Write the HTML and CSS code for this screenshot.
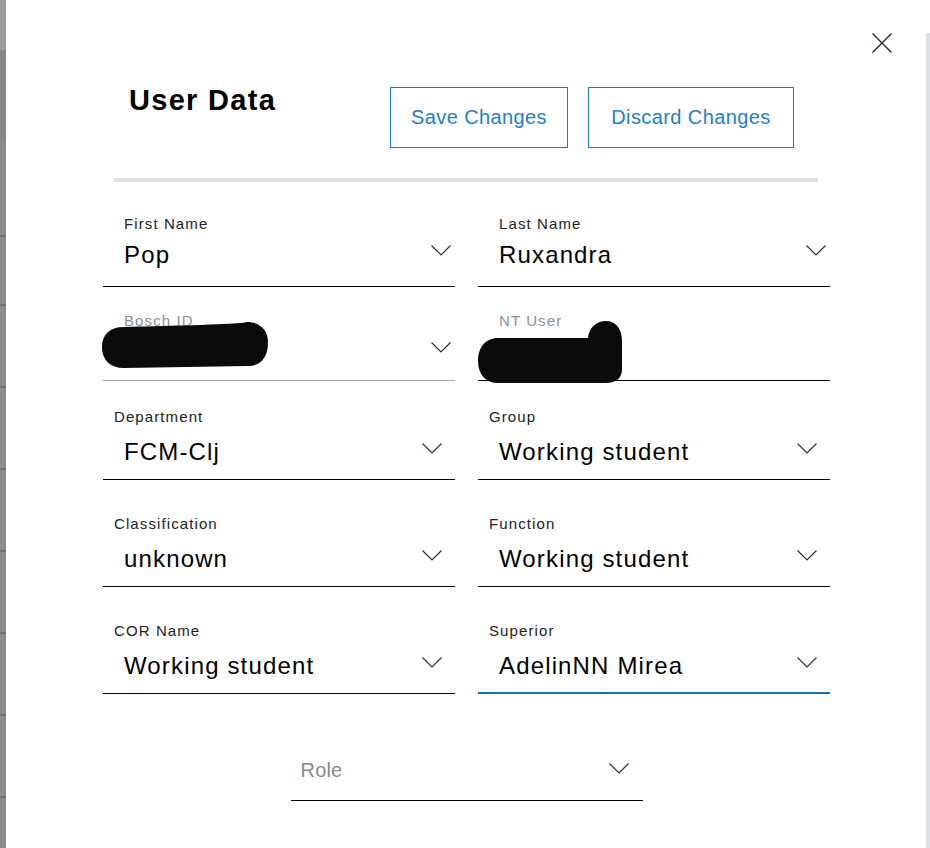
FILE: index.html
```html
<!DOCTYPE html>
<html lang="en">
<head>
<meta charset="utf-8">
<title>User Data</title>
<link rel="stylesheet" href="styles.css">
</head>
<body>
<div class="page">
  <div class="backdrop-edge"></div>
  <div class="modal">
    <div class="close-row">
      <button class="close" aria-label="Close">
        <svg width="20" height="20" viewBox="0 0 20 20"><path d="M0.5 0.5 L19.5 19.5 M19.5 0.5 L0.5 19.5" stroke="#1f2a30" stroke-width="1.4" fill="none"/></svg>
      </button>
    </div>
    <div class="header">
      <h1 class="title">User Data</h1>
      <div class="actions">
        <button class="btn btn-save">Save Changes</button>
        <button class="btn btn-discard">Discard Changes</button>
      </div>
    </div>
    <div class="separator"></div>
    <div class="form">
      <div class="field field-a row-1">
        <div class="label">First Name</div>
        <div class="value-row"><span class="value">Pop</span><svg class="chev" width="20" height="11" viewBox="0 0 20 11"><polyline points="0.5,0.5 10,10 19.5,0.5"/></svg></div>
      </div>
      <div class="field field-a row-1">
        <div class="label">Last Name</div>
        <div class="value-row"><span class="value">Ruxandra</span><svg class="chev" width="20" height="11" viewBox="0 0 20 11"><polyline points="0.5,0.5 10,10 19.5,0.5"/></svg></div>
      </div>
      <div class="field field-a row-2 field-disabled">
        <div class="label muted">Bosch ID</div>
        <div class="value-row"><span class="value"></span><svg class="chev" width="20" height="11" viewBox="0 0 20 11"><polyline points="0.5,0.5 10,10 19.5,0.5"/></svg></div>
        <svg class="redact redact-left" width="166" height="47" viewBox="0 0 166 47"><path d="M22 5 C60 4 110 3 140 1 L145 0 C158 0 166 8 166 20 C166 34 160 44 146 44 L22 46 C8 46 0 38 0 25 C0 12 8 5 22 5 Z"/></svg>
      </div>
      <div class="field field-a row-2">
        <div class="label muted">NT User</div>
        <div class="value-row"><span class="value"></span></div>
        <svg class="redact redact-right" width="145" height="63" viewBox="0 0 145 63"><path d="M20 17 L110 17 C111 6 119 0 128 0 C138 0 144 8 144 20 L144 48 C144 57 138 62 128 62 L20 62 C8 62 0 54 0 40 C0 26 8 17 20 17 Z"/></svg>
      </div>
      <div class="field field-b row-3">
        <div class="label">Department</div>
        <div class="value-row"><span class="value">FCM-Clj</span><svg class="chev" width="20" height="11" viewBox="0 0 20 11"><polyline points="0.5,0.5 10,10 19.5,0.5"/></svg></div>
      </div>
      <div class="field field-b row-3">
        <div class="label">Group</div>
        <div class="value-row"><span class="value">Working student</span><svg class="chev" width="20" height="11" viewBox="0 0 20 11"><polyline points="0.5,0.5 10,10 19.5,0.5"/></svg></div>
      </div>
      <div class="field field-b row-4">
        <div class="label">Classification</div>
        <div class="value-row"><span class="value">unknown</span><svg class="chev" width="20" height="11" viewBox="0 0 20 11"><polyline points="0.5,0.5 10,10 19.5,0.5"/></svg></div>
      </div>
      <div class="field field-b row-4">
        <div class="label">Function</div>
        <div class="value-row"><span class="value">Working student</span><svg class="chev" width="20" height="11" viewBox="0 0 20 11"><polyline points="0.5,0.5 10,10 19.5,0.5"/></svg></div>
      </div>
      <div class="field field-b row-5">
        <div class="label">COR Name</div>
        <div class="value-row"><span class="value">Working student</span><svg class="chev" width="20" height="11" viewBox="0 0 20 11"><polyline points="0.5,0.5 10,10 19.5,0.5"/></svg></div>
      </div>
      <div class="field field-b row-5 field-focus">
        <div class="label">Superior</div>
        <div class="value-row"><span class="value">AdelinNN Mirea</span><svg class="chev" width="20" height="11" viewBox="0 0 20 11"><polyline points="0.5,0.5 10,10 19.5,0.5"/></svg></div>
      </div>
      <div class="role-field">
        <span class="placeholder">Role</span>
        <svg class="chev" width="20" height="11" viewBox="0 0 20 11"><polyline points="0.5,0.5 10,10 19.5,0.5"/></svg>
      </div>
    </div>
  </div>
  <div class="scroll-edge"></div>
</div>
</body>
</html>
```
FILE: styles.css
```css
html, body {
  margin: 0;
  padding: 0;
  background: #fff;
}

body {
  font-family: "Liberation Sans", Arial, sans-serif;
  overflow: hidden;
}

.page {
  display: flex;
  width: 930px;
  height: 848px;
}

.backdrop-edge {
  flex: none;
  width: 6px;
  background:
    linear-gradient(#6c7073, #6c7073) 0 235px / 6px 2px no-repeat,
    repeating-linear-gradient(to bottom, #6c7073 0 2px, transparent 2px 82px) 0 304px / 6px 600px no-repeat,
    linear-gradient(to bottom, #9c9c9c 0 50px, #86888a 50px 140px, #8c8c8c 140px);
}

.modal {
  flex: 1;
  display: flex;
  flex-direction: column;
  padding-top: 33px;
  background: #fff;
}

.scroll-edge {
  flex: none;
  width: 4px;
  margin-top: 33px;
  background: #e0e1e4;
}

.close-row {
  display: flex;
  justify-content: flex-end;
  padding-right: 34px;
  height: 20px;
}

.close {
  display: block;
  width: 20px;
  height: 20px;
  padding: 0;
  border: 0;
  background: none;
}

.close svg {
  display: block;
}

.header {
  display: flex;
  align-items: flex-start;
  margin-top: 32px;
  padding-left: 123px;
}

.title {
  margin: 0;
  width: 261px;
  font-size: 29px;
  line-height: 30px;
  font-weight: 700;
  letter-spacing: 1.3px;
  color: #000;
}

.actions {
  display: flex;
  gap: 20px;
  margin-top: 2px;
}

.btn {
  height: 61px;
  box-sizing: border-box;
  border: 1px solid #1b7dbd;
  background: #fff;
  color: #2580c2;
  font-family: "Liberation Sans", Arial, sans-serif;
  font-size: 20px;
  letter-spacing: 0.4px;
  padding: 0;
}

.btn-save {
  width: 178px;
}

.btn-discard {
  width: 206px;
}

.separator {
  margin-top: 30px;
  margin-left: 108px;
  width: 704px;
  height: 4px;
  background: #dfe0e3;
}

.form {
  display: grid;
  grid-template-columns: 352px 352px;
  column-gap: 23px;
  margin-left: 97px;
  width: 727px;
}

.field {
  position: relative;
  border-bottom: 1px solid #000;
}

.label {
  font-size: 15px;
  line-height: 18px;
  letter-spacing: 1.1px;
  color: #222;
}

.label.muted {
  color: #89929b;
}

.value-row {
  display: flex;
  justify-content: space-between;
  align-items: flex-start;
  height: 28px;
  padding-left: 21px;
}

.value {
  font-size: 24px;
  line-height: 28px;
  letter-spacing: 1.15px;
  color: #000;
  white-space: nowrap;
}

.chev {
  flex: none;
  display: block;
  fill: none;
  stroke: #2a3338;
  stroke-width: 1.2;
}

/* rows 1-2 */
.field-a {
  padding-bottom: 17px;
}

.field-a .label {
  padding-left: 21px;
}

.field-a .value-row {
  margin-top: 8px;
  padding-right: 4px;
}

.field-a .chev {
  margin-top: 4px;
}

.row-1 {
  margin-top: 33px;
}

.row-2 {
  margin-top: 25px;
  padding-bottom: 14px;
}

.field-disabled {
  border-bottom-color: #a3a8ad;
}

/* rows 3-5 */
.field-b {
  padding-bottom: 13px;
}

.field-b .label {
  padding-left: 11px;
}

.field-b .value-row {
  margin-top: 12px;
  padding-right: 13px;
}

.field-b .chev {
  margin-top: 5px;
}

.row-3 {
  margin-top: 27px;
}

.row-4,
.row-5 {
  margin-top: 35px;
}

.field-focus {
  border-bottom: 2px solid #0f73b4;
  padding-bottom: 12px;
}

.redact {
  position: absolute;
  fill: #0b0b0b;
}

.redact-left {
  left: -1px;
  top: 10px;
}

.redact-right {
  left: 0;
  top: 9px;
}

.role-field {
  grid-column: 1 / -1;
  justify-self: center;
  width: 352px;
  box-sizing: border-box;
  display: flex;
  justify-content: space-between;
  align-items: flex-start;
  margin-top: 64px;
  padding: 0 14px 18px 10px;
  border-bottom: 1px solid #000;
}

.placeholder {
  font-size: 20px;
  line-height: 24px;
  letter-spacing: 0.2px;
  color: #8a8a8a;
}

.role-field .chev {
  margin-top: 5px;
}
```
